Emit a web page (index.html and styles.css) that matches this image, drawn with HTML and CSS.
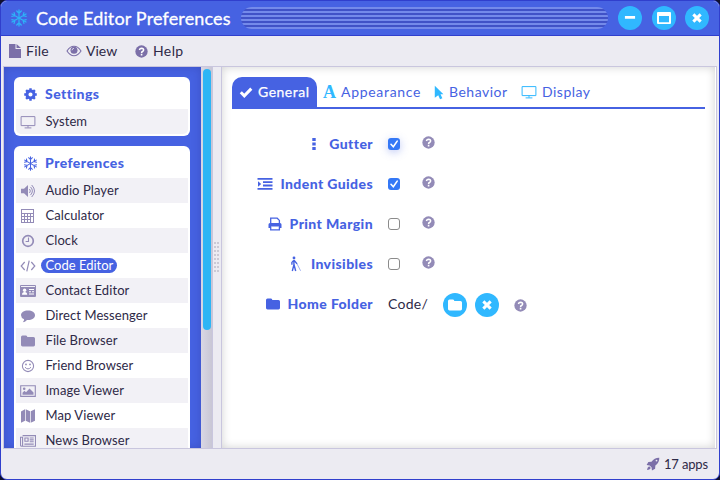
FILE: index.html
```
<!DOCTYPE html>
<html lang="en">
<head>
<meta charset="utf-8">
<title>Code Editor Preferences</title>
<link rel="stylesheet" href="styles.css">
</head>
<body>
<svg class="defs" aria-hidden="true">
  <symbol id="snow" viewBox="0 0 16 16"><g fill="none" stroke="currentColor" stroke-width="1.1" stroke-linecap="round"><g id="arm"><path d="M8 .8v14.400M6 1.800L8 3.800l2-2M6 14.200L8 12.200l2 2"/></g><use href="#arm" transform="rotate(60 8 8)"/><use href="#arm" transform="rotate(120 8 8)"/></g></symbol>
  <symbol id="file" viewBox="0 0 16 16"><path fill="currentColor" d="M2 1h6.500v5H14v9H2zM9.500 1L14 5H9.500z"/></symbol>
  <symbol id="eye" viewBox="0 0 16 16"><path d="M1 8Q4 3.3 8 3.3T15 8Q12 12.7 8 12.7T1 8z" fill="none" stroke="currentColor" stroke-width="1.1"/><circle cx="8" cy="7.3" r="3.5" fill="currentColor"/><path d="M6 7.3Q6.2 5.4 8 5.3" stroke="#ecebf2" fill="none" stroke-width=".8"/></symbol>
  <symbol id="help" viewBox="0 0 16 16"><circle cx="8" cy="8" r="7.6" fill="currentColor"/><path d="M5.4 6.2Q6 4.1 8.1 4.1 10.6 4.2 10.6 6.1 10.5 7.4 9.2 8 8.1 8.6 8.1 9.7" stroke="#fff" stroke-width="1.9" fill="none"/><path fill="#fff" d="M7.1 10.8h2v2h-2z"/></symbol>
  <symbol id="gear" viewBox="0 0 16 16"><circle cx="8" cy="8" r="3.800" fill="none" stroke="currentColor" stroke-width="3.2"/><path d="M8 1.300v3M8 11.700v3M1.300 8h3M11.700 8h3M3.300 3.300l2 2M10.700 10.700l2 2M3.300 12.700l2-2M10.700 5.300l2-2" stroke="currentColor" stroke-width="2.6"/></symbol>
  <symbol id="screen" viewBox="0 0 16 16"><path d="M1.1 2.6h13.8v9H1.1zM8 11.6v2M4.6 13.9h6.8" fill="none" stroke="currentColor" stroke-width="1"/></symbol>
  <symbol id="sound" viewBox="0 0 16 16"><path fill="currentColor" d="M1 5.7h3L8 2v12l-4-3.7H1z"/><path d="M9.5 6q1.7 2 0 4M10.5 3.9q3.8 4 0 8.2M11.7 2q5.6 6 0 12" fill="none" stroke="currentColor"/></symbol>
  <symbol id="calc" viewBox="0 0 16 16"><path fill="currentColor" fill-rule="evenodd" d="M1 1h13v14H1zM2 2v3h11V2zM2 6v2h2V6zM5 6v2h2V6zM8 6v2h2V6zM11 6v2h2V6zM2 9v2h2V9zM5 9v2h2V9zM8 9v2h2V9zM11 9v5h2V9zM2 12v2h2v-2zM5 12v2h2v-2zM8 12v2h2v-2z"/></symbol>
  <symbol id="clock" viewBox="0 0 16 16"><circle cx="8" cy="8" r="5.300" fill="none" stroke="currentColor" stroke-width="1.700"/><path d="M8.5 4.500v4H5.600" fill="none" stroke="currentColor" stroke-width="1.1"/></symbol>
  <symbol id="code" viewBox="0 0 16 16"><path d="M4.7 4L1.2 8l3.500 4M11.3 4l3.500 4-3.500 4M9.200 2.600L6.800 13.400" fill="none" stroke="currentColor" stroke-width="1.2"/></symbol>
  <symbol id="card" viewBox="0 0 16 16"><path fill="currentColor" fill-rule="evenodd" d="M1 2h14q1 0 1 1v10q0 1-1 1H1q-1 0-1-1V3q0-1 1-1zM1 3v.9h14V3z"/><g fill="#fff"><circle cx="4.600" cy="7.200" r="1.700"/><path d="M2 11.800q0-2.800 2.600-2.800t2.600 2.800zM9 6h5v1H9zM9 8.200h2v1H9zM12 8.200h2v1h-2zM9 10.400h5v1H9z"/></g></symbol>
  <symbol id="chat" viewBox="0 0 16 16"><path fill="currentColor" d="M8 2.500c4 0 7 2 7 4.700S12 12 8 12l-1-.1Q5 14 2.800 14.200 4.200 12.800 4.100 11.200 1 9.800 1 7.200C1 4.500 4 2.500 8 2.500z"/></symbol>
  <symbol id="folder" viewBox="0 0 16 16"><path fill="currentColor" d="M1 4q0-1.500 1.500-1.500H6q1.300 0 1.300 1.500h6.200Q15 4 15 5.500v6.600q0 1.400-1.500 1.400h-11Q1 13.500 1 12.100z"/></symbol>
  <symbol id="smile" viewBox="0 0 16 16"><circle cx="8" cy="8" r="5.600" fill="none" stroke="currentColor" stroke-width="1.100"/><circle cx="6" cy="6.400" r=".9" fill="currentColor"/><circle cx="10" cy="6.400" r=".9" fill="currentColor"/><path d="M5 9.200q3 3.400 6 0" fill="none" stroke="currentColor"/></symbol>
  <symbol id="image" viewBox="0 0 16 16"><path d="M.7 2.700h14.600v10.700H.7z" fill="none" stroke="currentColor" stroke-width="1.100"/><circle cx="4.200" cy="5.800" r="1.300" fill="currentColor"/><path fill="currentColor" d="M2.500 11.700V9.800l2-2 1.500 1.400 3.500-3.700 4 4v2.200z"/></symbol>
  <symbol id="map" viewBox="0 0 16 16"><path fill="currentColor" d="M1 3.500l4-2.200v11.500l-4 2zM5.700 1.300l4.300 2v11.500l-4.300-2zM10.700 3.300l4.300-2v11.500l-4.300 2z"/></symbol>
  <symbol id="news" viewBox="0 0 16 16"><path d="M2.600 2.600h12.900v10.600H1.600Q.5 13.200.5 12V4.200h2.100v7.600q0 1.400-1 1.400M4.900 5h3.200v3.300H4.900zM9.700 5h4M9.700 6.900h4M9.700 8.800h4M4.400 11.100h9.300" fill="none" stroke="currentColor" stroke-width="1.100"/></symbol>
  <symbol id="check" viewBox="0 0 16 16"><path d="M2.800 8.300l3.500 3.500 7-7.200" fill="none" stroke="currentColor" stroke-width="3"/></symbol>
  <symbol id="tick" viewBox="0 0 12 12"><path d="M3 6.300l2.300 2.400 3.900-5.600" fill="none" stroke="#fff" stroke-width="1.600" stroke-linecap="round"/></symbol>
  <symbol id="pointer" viewBox="0 0 10 16"><path fill="currentColor" d="M.5.8L9.700 9.800H6.600l2 4.400-2.500 1-1.900-4.400-3.700 2.700z"/></symbol>
  <symbol id="dots" viewBox="0 0 16 16"><path fill="currentColor" d="M6.300 2h3.400v3H6.300zM6.300 6.500h3.400v3H6.300zM6.300 11h3.400v3H6.300z"/></symbol>
  <symbol id="indent" viewBox="0 0 16 16"><path fill="currentColor" d="M.5 2h15v1.800H.5zM6 5.300h9.500v1.800H6zM6 8.600h9.500v1.800H6zM.5 12h15v1.800H.5zM1 5.200L4.200 8 1 10.700z"/></symbol>
  <symbol id="print" viewBox="0 0 16 16"><path d="M3.700 8V2.200h6.500l2.200 2.200V8M3.700 10.500v3.300h8.700v-3.300" fill="none" stroke="currentColor" stroke-width="1.300"/><path fill="currentColor" d="M3 7h10q1.500 0 1.500 1.500V12h-2.500v-1.500H4V12H1.500V8.500Q1.500 7 3 7z"/></symbol>
  <symbol id="walk" viewBox="0 0 16 16"><circle cx="6" cy="2" r="1.400" fill="currentColor"/><path d="M5.900 4v5L4.300 15M6 8.800L7.700 15M5.500 4.600L3.900 6.400v2.400M6.200 4.500l2.900 3.400" fill="none" stroke="currentColor" stroke-width="1.400"/><path d="M9 7.800L12.600 14.800" stroke="currentColor" stroke-width=".5"/></symbol>
  <symbol id="min" viewBox="0 0 16 16"><path fill="#fff" d="M2.200 5.700h11.600v3.200H2.200z"/></symbol>
  <symbol id="max" viewBox="0 0 16 16"><path fill="#fff" fill-rule="evenodd" d="M2 2h12q1 0 1 1v10q0 1-1 1H2q-1 0-1-1V3q0-1 1-1zM3 6v6.300h10V6z"/></symbol>
  <symbol id="close" viewBox="0 0 16 16"><path d="M3.800 3.800l8.400 8.400M12.200 3.800l-8.400 8.400" stroke="#fff" stroke-width="3.400"/></symbol>
  <symbol id="rocket" viewBox="0 0 16 16"><path fill="currentColor" d="M15.200.8Q15.400 6.300 10.700 9.700l-.3 3.600-3.600 2-.5-3.500-2.200-2.100L.7 9.200l2-3.500 3.600-.4Q9.700.6 15.200.8zM3.600 10.500l2 2q-1.600 2.400-4.400 2.300.1-2.800 2.400-4.300z"/><circle cx="12" cy="4" r="1" fill="#ecebf2"/></symbol>
</svg>

<div class="window">
  <header class="titlebar">
    <svg class="logo"><use href="#snow"/></svg>
    <h1>Code Editor Preferences</h1>
    <div class="grip"></div>
    <button class="round"><svg><use href="#min"/></svg></button>
    <button class="round"><svg class="big"><use href="#max"/></svg></button>
    <button class="round"><svg><use href="#close"/></svg></button>
  </header>
  <nav class="menubar">
    <a class="m-file"><svg><use href="#file"/></svg><span>File</span></a>
    <a class="m-view"><svg><use href="#eye"/></svg><span>View</span></a>
    <a class="m-help"><svg><use href="#help"/></svg><span>Help</span></a>
  </nav>
  <main class="body">
    <aside class="sidebar">
      <section class="panel">
        <h2><svg><use href="#gear"/></svg><span>Settings</span></h2>
        <ul><li><svg><use href="#screen"/></svg><span>System</span></li></ul>
      </section>
      <section class="panel">
        <h2><svg><use href="#snow"/></svg><span>Preferences</span></h2>
        <ul>
          <li><svg><use href="#sound"/></svg><span>Audio Player</span></li>
          <li><svg><use href="#calc"/></svg><span>Calculator</span></li>
          <li><svg><use href="#clock"/></svg><span>Clock</span></li>
          <li class="selected"><svg><use href="#code"/></svg><span>Code Editor</span></li>
          <li><svg><use href="#card"/></svg><span>Contact Editor</span></li>
          <li><svg><use href="#chat"/></svg><span>Direct Messenger</span></li>
          <li><svg><use href="#folder"/></svg><span>File Browser</span></li>
          <li><svg><use href="#smile"/></svg><span>Friend Browser</span></li>
          <li><svg><use href="#image"/></svg><span>Image Viewer</span></li>
          <li><svg><use href="#map"/></svg><span>Map Viewer</span></li>
          <li><svg><use href="#news"/></svg><span>News Browser</span></li>
        </ul>
      </section>
    </aside>
    <div class="scroll"><div class="thumb"></div></div>
    <div class="splitter"><div class="dots"></div></div>
    <section class="content">
      <nav class="tabs">
        <a class="tab active"><svg><use href="#check"/></svg><span>General</span></a>
        <a class="tab t-app"><b class="glyph">A</b><span>Appearance</span></a>
        <a class="tab t-beh"><svg class="ptr"><use href="#pointer"/></svg><span>Behavior</span></a>
        <a class="tab t-dis"><svg><use href="#screen"/></svg><span>Display</span></a>
      </nav>
      <div class="form">
        <div class="row"><label><svg><use href="#dots"/></svg><span>Gutter</span></label><i class="box on glow"><svg><use href="#tick"/></svg></i><svg class="q"><use href="#help"/></svg></div>
        <div class="row"><label><svg><use href="#indent"/></svg><span>Indent Guides</span></label><i class="box on"><svg><use href="#tick"/></svg></i><svg class="q"><use href="#help"/></svg></div>
        <div class="row"><label><svg><use href="#print"/></svg><span>Print Margin</span></label><i class="box"></i><svg class="q"><use href="#help"/></svg></div>
        <div class="row"><label><svg><use href="#walk"/></svg><span>Invisibles</span></label><i class="box"></i><svg class="q"><use href="#help"/></svg></div>
        <div class="row"><label><svg><use href="#folder"/></svg><span>Home Folder</span></label><span class="path">Code/</span><button class="round"><svg class="big"><use href="#folder"/></svg></button><button class="round last"><svg><use href="#close"/></svg></button><svg class="q low"><use href="#help"/></svg></div>
      </div>
    </section>
  </main>
  <footer><svg><use href="#rocket"/></svg><span>17 apps</span></footer>
</div>
</body>
</html>
```
FILE: styles.css
```
* { box-sizing: border-box; }
body { margin: 0; width: 720px; height: 480px; overflow: hidden; background: #10102e; font: 13px/20px Lato, "Open Sans", sans-serif; color: #2e2947; }
.defs { display: none; }
svg { width: 16px; height: 16px; flex: none; }
h1, h2, ul { margin: 0; padding: 0; list-style: none; }
a, h2, li, label, header, footer, button, .row { display: flex; align-items: center; }

.window { height: 480px; border: 1px solid #303fcd; border-radius: 7px; background: #ecebf2; display: flex; flex-direction: column; overflow: hidden; }
.titlebar { height: 35px; flex: none; background: #4662e2; border-bottom: 1px solid #303fcd; padding: 0 10px 0 9px; }
.logo { width: 18px; height: 18px; color: #2db4f8; }
h1 { width: 195px; margin: -1px 0 0 8px; font-size: 18px; font-weight: 400; color: #fff; white-space: nowrap; letter-spacing: .15px; -webkit-text-stroke: .3px #fff; }
.grip { width: 367px; height: 22px; margin: 0 10px; border-radius: 11px; background: repeating-linear-gradient(#748aea 0 2px, #4052c7 2px 4px); }
.round { justify-content: center; width: 24px; height: 24px; flex: none; border: 0; padding: 0; border-radius: 50%; background: #30b8ff; color: #fff; }
.round svg { width: 14px; height: 14px; }
.round svg.big { width: 16px; height: 16px; }
.titlebar .round + .round { margin-left: 9.500px; }

.menubar { height: 30px; flex: none; display: flex; padding-left: 6px; font-size: 14px; }
.menubar svg { color: #7b6fa8; margin-right: 3px; }
.menubar .m-file { width: 60px; letter-spacing: .25px; }
.menubar .m-view { width: 67px; }
.menubar .m-view svg { margin: 0 4px 0 -1px; }
.menubar .m-help { letter-spacing: .4px; }
.menubar .m-help svg { width: 13px; height: 13px; margin: 0 5px 0 1px; }

.body { height: 383px; flex: none; margin: 0 2px; border: 1px solid #c9c6de; display: flex; }
.sidebar { width: 197px; padding: 10px 11px 0 10px; overflow: hidden; background: #4662e2; box-shadow: inset 0 0 10px rgba(30, 30, 110, .25); }
.panel { background: #fff; border-radius: 6px; padding: 0 2px 2px; margin-bottom: 10px; }
h2 { height: 32px; padding: 2px 0 0 7px; color: #4662e2; font-size: 14px; font-weight: 900; letter-spacing: .45px; }
h2 svg { width: 15px; height: 15px; margin-right: 7px; }
li { height: 25px; padding-left: 4px; letter-spacing: .08px; }
li:nth-child(odd) { background: #f2f1f6; }
.panel:first-child li { border-radius: 0 0 5px 5px; }
li svg { color: #938bb7; margin-right: 5px; }
li span { height: 15px; line-height: 15px; padding: 0 4px 0 5px; margin-left: -.5px; border-radius: 8px; white-space: nowrap; }
.selected span { background: #4662e2; color: #fff; }
.selected { letter-spacing: 0; }
.scroll { width: 11px; padding: 2px 1px 0 2px; background: linear-gradient(90deg, #d9d7e4, #c8c6d5); }
.thumb { height: 261px; border-radius: 4px; background: #2eb5f5; }
.splitter { width: 10px; border: solid #c9c6de; border-width: 0 1px; display: flex; align-items: center; justify-content: center; }
.dots { width: 6px; height: 31px; background: conic-gradient(from 270deg at 2px 2px, #cbc9d5 90deg, transparent 0) 0 0 / 3px 4px; }
.content { flex: 1; padding: 10px 10px 0 10px; background: #fff; box-shadow: inset 0 0 10px rgba(0, 0, 0, .18); border-right: 1px solid #fff; }

.tabs { display: flex; height: 32px; border-bottom: 2px solid #4662e2; font-size: 14px; letter-spacing: .5px; color: #4662e2; }
.tab { height: 30px; }
.tab svg, .glyph { color: #30b8ff; }
.tab.active { width: 85px; padding-left: 6px; background: #4662e2; color: #fff; border-radius: 10px 10px 0 0; -webkit-text-stroke: .25px #fff; }
.tab.active svg { color: #fff; margin-right: 4px; }
.glyph { width: 14px; margin-right: 4px; font: bold 18px/18px "Liberation Serif", serif; }
.t-app { width: 110px; margin-left: 6px; letter-spacing: .7px; }
.t-app span, .t-beh span, .t-dis span { white-space: nowrap; }
.tab .ptr { width: 10px; height: 15px; margin: 0 5px 0 1px; }
.t-beh { width: 88px; }
.t-dis svg { margin-right: 5px; }

.form { padding-top: 15px; }
.row { height: 40px; }
label { width: 141px; justify-content: flex-end; font-size: 14px; font-weight: 900; letter-spacing: .4px; color: #4662e2; white-space: nowrap; }
label svg { margin-right: 7px; }
.box { width: 12px; height: 12px; margin-left: 15px; border: 1px solid #8b8b8b; border-radius: 3px; background: #fff; display: flex; }
.box.on { border: 0; background: #3478f6; }
.box svg { width: 12px; height: 12px; }
.box.glow { box-shadow: 0 2px 8px rgba(70, 98, 226, .35); }
.q { width: 13px; height: 13px; margin: -4px 0 0 21.500px; color: #938bb7; }
.path { width: 40px; margin-left: 15px; font-size: 14px; letter-spacing: .25px; }
.row .round { margin: 2px 0 0 15px; }
.row .last { margin-left: 8px; }
.row .low { margin: 2px 0 0 15px; }

footer { flex: 1; justify-content: flex-end; padding-right: 11px; letter-spacing: -.15px; }
footer svg { width: 14px; height: 14px; color: #7b6fa8; margin-right: 4px; }
```
